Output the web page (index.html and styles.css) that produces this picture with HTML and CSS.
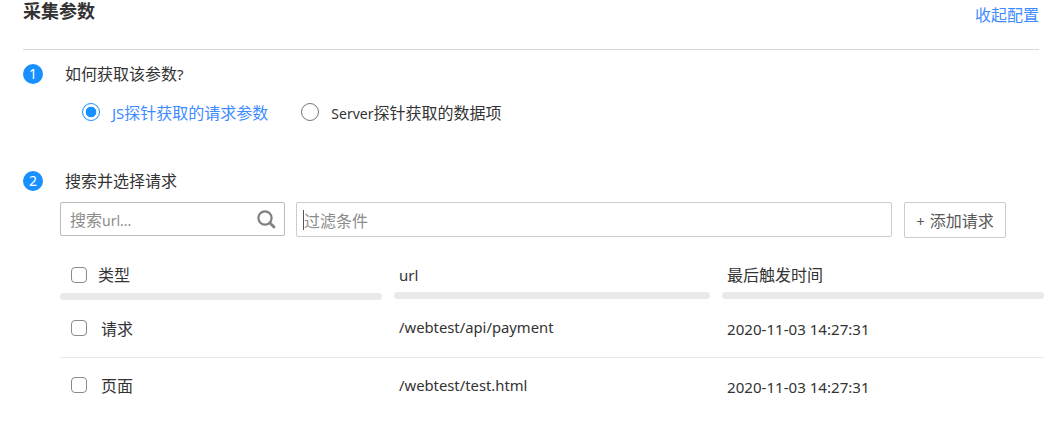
FILE: index.html
```html
<!DOCTYPE html>
<html lang="zh-CN">
<head>
<meta charset="utf-8">
<title>采集参数</title>
<link rel="stylesheet" href="styles.css">
</head>
<body>
<main class="panel">
  <header class="panel-head">
    <h2 class="panel-title">采集参数</h2>
    <a class="collapse-link">收起配置</a>
  </header>
  <section class="step step-one">
    <div class="step-head"><span class="badge">1</span><span class="step-label">如何获取该参数<span class="lat">?</span></span></div>
    <div class="radios">
      <label class="radio checked"><span class="radio-dot"></span><span><span class="lat">JS</span>探针获取的请求参数</span></label>
      <label class="radio"><span class="radio-dot"></span><span><span class="lat-tight">Server</span>探针获取的数据项</span></label>
    </div>
  </section>
  <section class="step step-two">
    <div class="step-head"><span class="badge">2</span><span class="step-label">搜索并选择请求</span></div>
    <div class="toolbar">
      <div class="field search"><span class="placeholder">搜索<span class="lat-tight">url...</span></span>
        <svg class="search-icon" width="20" height="20" viewBox="0 0 20 20" fill="none" stroke="#7f7f7f"><circle cx="9" cy="9" r="6.6" stroke-width="2.2"/><path d="M14 14l4 4" stroke-width="2.8" stroke-linecap="round"/></svg>
      </div>
      <div class="field filter"><span class="caret"></span><span class="placeholder">过滤条件</span></div>
      <button class="add-btn"><span class="lat plus">+</span>添加请求</button>
    </div>
    <div class="table">
      <div class="thead">
        <div class="th first"><span class="check"></span><span class="th-type">类型</span></div>
        <div class="th lat">url</div>
        <div class="th">最后触发时间</div>
      </div>
      <div class="bars"><span class="bar bar-low"></span><span class="bar"></span><span class="bar"></span></div>
      <div class="row row-one">
        <div class="cell first"><span class="check"></span><span class="cell-type">请求</span></div>
        <div class="cell url">/webtest/api/payment</div>
        <div class="cell time">2020-11-03 14:27:31</div>
      </div>
      <div class="row row-two">
        <div class="cell first"><span class="check"></span><span class="cell-type">页面</span></div>
        <div class="cell url">/webtest/test.html</div>
        <div class="cell time">2020-11-03 14:27:31</div>
      </div>
    </div>
  </section>
</main>
</body>
</html>
```
FILE: styles.css
```css
* { box-sizing: border-box; }
html, body { margin: 0; padding: 0; background: #fff; }
body {
  width: 1064px; height: 437px; overflow: hidden;
  font-family: "Noto Sans", "Noto Sans CJK SC", sans-serif;
  font-size: 16px; color: #333;
}
.lat { font-size: 15px; }
.lat-tight { font-size: 14px; }
.panel { padding-left: 23px; width: 1044px; }
.panel-head {
  width: 1016px; height: 50px;
  display: flex; justify-content: space-between; align-items: flex-start;
  border-bottom: 1px solid #d9d9d9;
}
.panel-title { margin: 0; font-size: 18px; line-height: 22px; font-weight: 700; color: #333; }
.collapse-link { color: #3d8bff; line-height: 20px; margin-top: 5px; }
.step-one { height: 120px; padding-top: 13px; }
.step-head { display: flex; align-items: center; height: 21px; }
.badge {
  width: 20px; height: 20px; border-radius: 50%;
  background: #1890ff; color: #fff; font-size: 14px;
  display: flex; align-items: center; justify-content: center;
}
.step-label { margin: -2px 0 0 22px; color: #333; }
.radios { display: flex; margin: 18px 0 0 59px; gap: 33px; }
.radio { display: flex; align-items: center; height: 20px; color: #333; }
.radio.checked { color: #3d8bff; }
.radio-dot {
  width: 18px; height: 18px; border-radius: 50%;
  border: 1px solid #777; margin-right: 12px; background: #fff;
}
.radio.checked .radio-dot {
  border-color: #1890ff;
  background: radial-gradient(circle, #1890ff 0, #1890ff 5px, #fff 5.6px);
}
.toolbar { display: flex; margin: 11px 0 0 37px; height: 36px; align-items: flex-start; }
.field {
  display: flex; align-items: center;
  border: 1px solid #ccc; border-radius: 2px; background: #fff;
}
.search { width: 225px; height: 34px; padding: 0 8px 0 9px; justify-content: space-between; border-color: #bbb; }
.filter { width: 596px; height: 35px; margin-left: 11px; padding-left: 6px; }
.placeholder { color: #8c8c8c; }
.caret { width: 1px; height: 20px; background: #555; }
.add-btn {
  width: 102px; height: 36px; margin-left: 12px; padding: 0;
  background: #fff; border: 1px solid #ccc; border-radius: 2px;
  font: inherit; color: #595959;
}
.plus { margin-right: 5px; }
.table { width: 984px; margin: 0 0 0 37px; }
.thead, .row, .bars { display: grid; grid-template-columns: 322px 316px 322px; column-gap: 12px; width: 984px; }
.thead { height: 55px; padding-top: 25px; align-items: start; }
.th { line-height: 24px; padding-left: 5px; color: #333; }
.th.first, .cell.first { display: flex; align-items: center; padding-left: 11px; }
.check {
  width: 16px; height: 16px; border: 1px solid #8a8a8a;
  border-radius: 4px; background: #fff; flex: none;
}
.th-type { margin-left: 11px; }
.cell-type { margin-left: 14px; font-size: 16px; }
.bars { height: 6px; margin-top: -1px; }
.bar { height: 7px; background: #e9e9e9; border-radius: 4px; }
.bar-low { margin-top: 1px; }
.row { align-items: center; }
.row-one { height: 60px; border-bottom: 1px solid #e8e8e8; }
.row-two { height: 53px; }
.cell { padding-left: 5px; color: #333; }
.url { font-size: 14.8px; margin-top: -1px; }
.time { font-size: 15.1px; margin-top: 3px; }
.row-two .url { margin-top: 1px; }
.row-two .time { margin-top: 5px; }
```
